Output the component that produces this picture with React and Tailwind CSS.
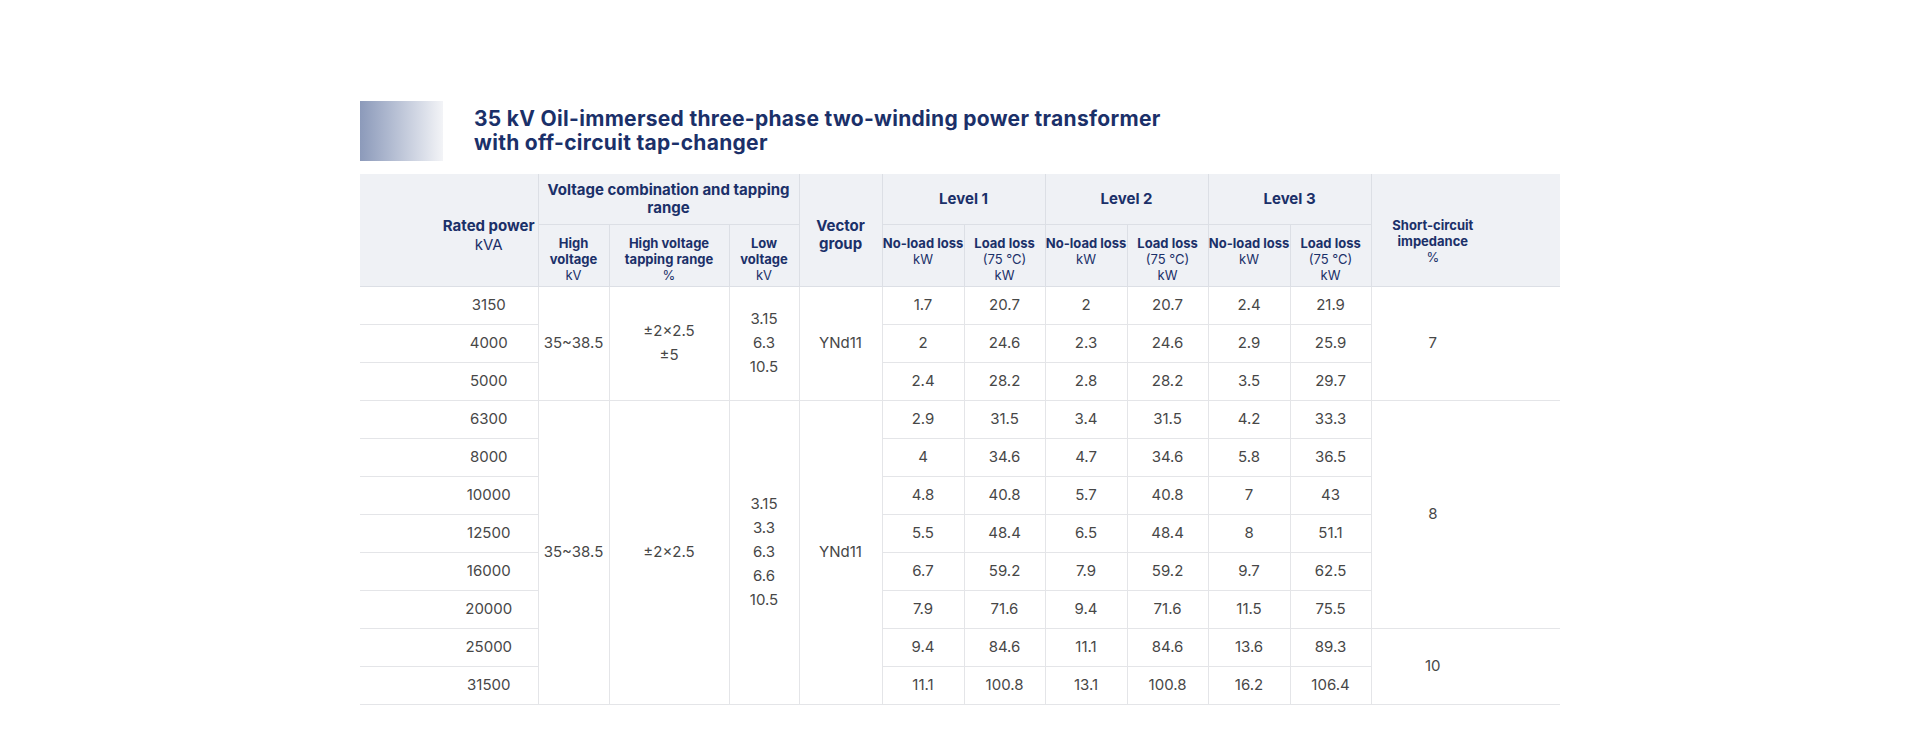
import React from "react";

const FONT = "font-['Inter','Open_Sans',sans-serif]";

const B = "border-[#e4e5e8]";
const HB = "border-[#dcdfe5]";

const group1 = [
  ["3150", "1.7", "20.7", "2", "20.7", "2.4", "21.9"],
  ["4000", "2", "24.6", "2.3", "24.6", "2.9", "25.9"],
  ["5000", "2.4", "28.2", "2.8", "28.2", "3.5", "29.7"],
];
const group2 = [
  ["6300", "2.9", "31.5", "3.4", "31.5", "4.2", "33.3"],
  ["8000", "4", "34.6", "4.7", "34.6", "5.8", "36.5"],
  ["10000", "4.8", "40.8", "5.7", "40.8", "7", "43"],
  ["12500", "5.5", "48.4", "6.5", "48.4", "8", "51.1"],
  ["16000", "6.7", "59.2", "7.9", "59.2", "9.7", "62.5"],
  ["20000", "7.9", "71.6", "9.4", "71.6", "11.5", "75.5"],
  ["25000", "9.4", "84.6", "11.1", "84.6", "13.6", "89.3"],
  ["31500", "11.1", "100.8", "13.1", "100.8", "16.2", "106.4"],
];

const td = `border-b border-r ${B} h-[38px] p-0 text-center align-middle`;
const tdMulti = `border-b border-r ${B} p-0 text-center align-middle leading-[24px]`;

function LevelCells({ r }) {
  return (
    <>
      {r.slice(1).map((v, i) => (
        <td key={i} className={td}>
          {v}
        </td>
      ))}
    </>
  );
}

export default function App() {
  return (
    <div className={`min-h-[755px] bg-white ${FONT}`}>
      <div className="ml-[360px] w-[1200px] pt-[101px]">
        <div className="flex items-center gap-[31px]">
          <div className="h-[60px] w-[83px] bg-gradient-to-r from-[#8c9aba] to-[#f3f4f7]" />
          <h1 className="text-[21px] font-bold leading-[24px] tracking-[0.3px] text-[#1b3069]">
            35 kV Oil-immersed three-phase two-winding power transformer
            <br />
            with off-circuit tap-changer
          </h1>
        </div>

        <table className="mt-[13px] w-[1200px] table-fixed border-collapse">
          <colgroup>
            <col className="w-[178px]" />
            <col className="w-[71px]" />
            <col className="w-[120px]" />
            <col className="w-[70px]" />
            <col className="w-[83px]" />
            <col className="w-[82px]" />
            <col className="w-[81px]" />
            <col className="w-[82px]" />
            <col className="w-[81px]" />
            <col className="w-[82px]" />
            <col className="w-[81px]" />
            <col className="w-[189px]" />
          </colgroup>
          <thead className="bg-[#eff1f5] text-[#1b3069]">
            <tr>
              <th
                rowSpan={2}
                className={`border-b border-r ${HB} p-0 pl-[80px] pt-[42px] text-center align-top`}
              >
                <div className="text-[15px] font-bold leading-[19px]">Rated power</div>
                <div className="text-[15px] font-normal leading-[19px]">kVA</div>
              </th>
              <th
                colSpan={3}
                className={`h-[50px] border-b border-r ${HB} p-0 text-center align-middle text-[15px] font-bold leading-[18px]`}
              >
                Voltage combination and tapping
                <br />
                range
              </th>
              <th
                rowSpan={2}
                className={`border-b border-r ${HB} p-0 pt-[43px] text-center align-top text-[15px] font-bold leading-[18px]`}
              >
                Vector
                <br />
                group
              </th>
              {["Level 1", "Level 2", "Level 3"].map((l) => (
                <th
                  key={l}
                  colSpan={2}
                  className={`border-b border-r ${HB} p-0 text-center align-middle text-[15px] font-bold leading-[18px]`}
                >
                  {l}
                </th>
              ))}
              <th
                rowSpan={2}
                className={`border-b ${HB} p-0 pr-[66px] pt-[43px] text-center align-top text-[13px] leading-[16px]`}
              >
                <div className="font-bold">
                  Short-circuit
                  <br />
                  impedance
                </div>
                <div className="font-normal">%</div>
              </th>
            </tr>
            <tr className="h-[62px]">
              <SubH title={["High", "voltage"]} unit={["kV"]} />
              <SubH title={["High voltage", "tapping range"]} unit={["%"]} />
              <SubH title={["Low", "voltage"]} unit={["kV"]} />
              {[1, 2, 3].map((n) => (
                <React.Fragment key={n}>
                  <SubH title={["No-load loss"]} unit={["kW"]} />
                  <SubH title={["Load loss"]} unit={["(75 °C)", "kW"]} />
                </React.Fragment>
              ))}
            </tr>
          </thead>
          <tbody className="text-[15px] font-normal text-[#474747]">
            {group1.map((r, i) => (
              <tr key={r[0]}>
                <td className={`${td} pl-[80px]`}>{r[0]}</td>
                {i === 0 && (
                  <>
                    <td rowSpan={3} className={tdMulti}>
                      35~38.5
                    </td>
                    <td rowSpan={3} className={tdMulti}>
                      ±2×2.5
                      <br />
                      ±5
                    </td>
                    <td rowSpan={3} className={tdMulti}>
                      3.15
                      <br />
                      6.3
                      <br />
                      10.5
                    </td>
                    <td rowSpan={3} className={tdMulti}>
                      YNd11
                    </td>
                  </>
                )}
                <LevelCells r={r} />
                {i === 0 && (
                  <td rowSpan={3} className={`border-b ${B} p-0 pr-[66px] text-center align-middle`}>
                    7
                  </td>
                )}
              </tr>
            ))}
            {group2.map((r, i) => (
              <tr key={r[0]}>
                <td className={`${td} pl-[80px]`}>{r[0]}</td>
                {i === 0 && (
                  <>
                    <td rowSpan={8} className={tdMulti}>
                      35~38.5
                    </td>
                    <td rowSpan={8} className={tdMulti}>
                      ±2×2.5
                    </td>
                    <td rowSpan={8} className={tdMulti}>
                      3.15
                      <br />
                      3.3
                      <br />
                      6.3
                      <br />
                      6.6
                      <br />
                      10.5
                    </td>
                    <td rowSpan={8} className={tdMulti}>
                      YNd11
                    </td>
                  </>
                )}
                <LevelCells r={r} />
                {i === 0 && (
                  <td rowSpan={6} className={`border-b ${B} p-0 pr-[66px] text-center align-middle`}>
                    8
                  </td>
                )}
                {i === 6 && (
                  <td rowSpan={2} className={`border-b ${B} p-0 pr-[66px] text-center align-middle`}>
                    10
                  </td>
                )}
              </tr>
            ))}
          </tbody>
        </table>
      </div>
    </div>
  );
}

function SubH({ title, unit }) {
  return (
    <th className={`border-b border-r ${HB} p-0 pt-[10px] text-center align-top text-[13px] leading-[16px]`}>
      <div className="font-bold">
        {title.map((t, i) => (
          <div key={i}>{t}</div>
        ))}
      </div>
      <div className="font-normal">
        {unit.map((t, i) => (
          <div key={i}>{t}</div>
        ))}
      </div>
    </th>
  );
}
